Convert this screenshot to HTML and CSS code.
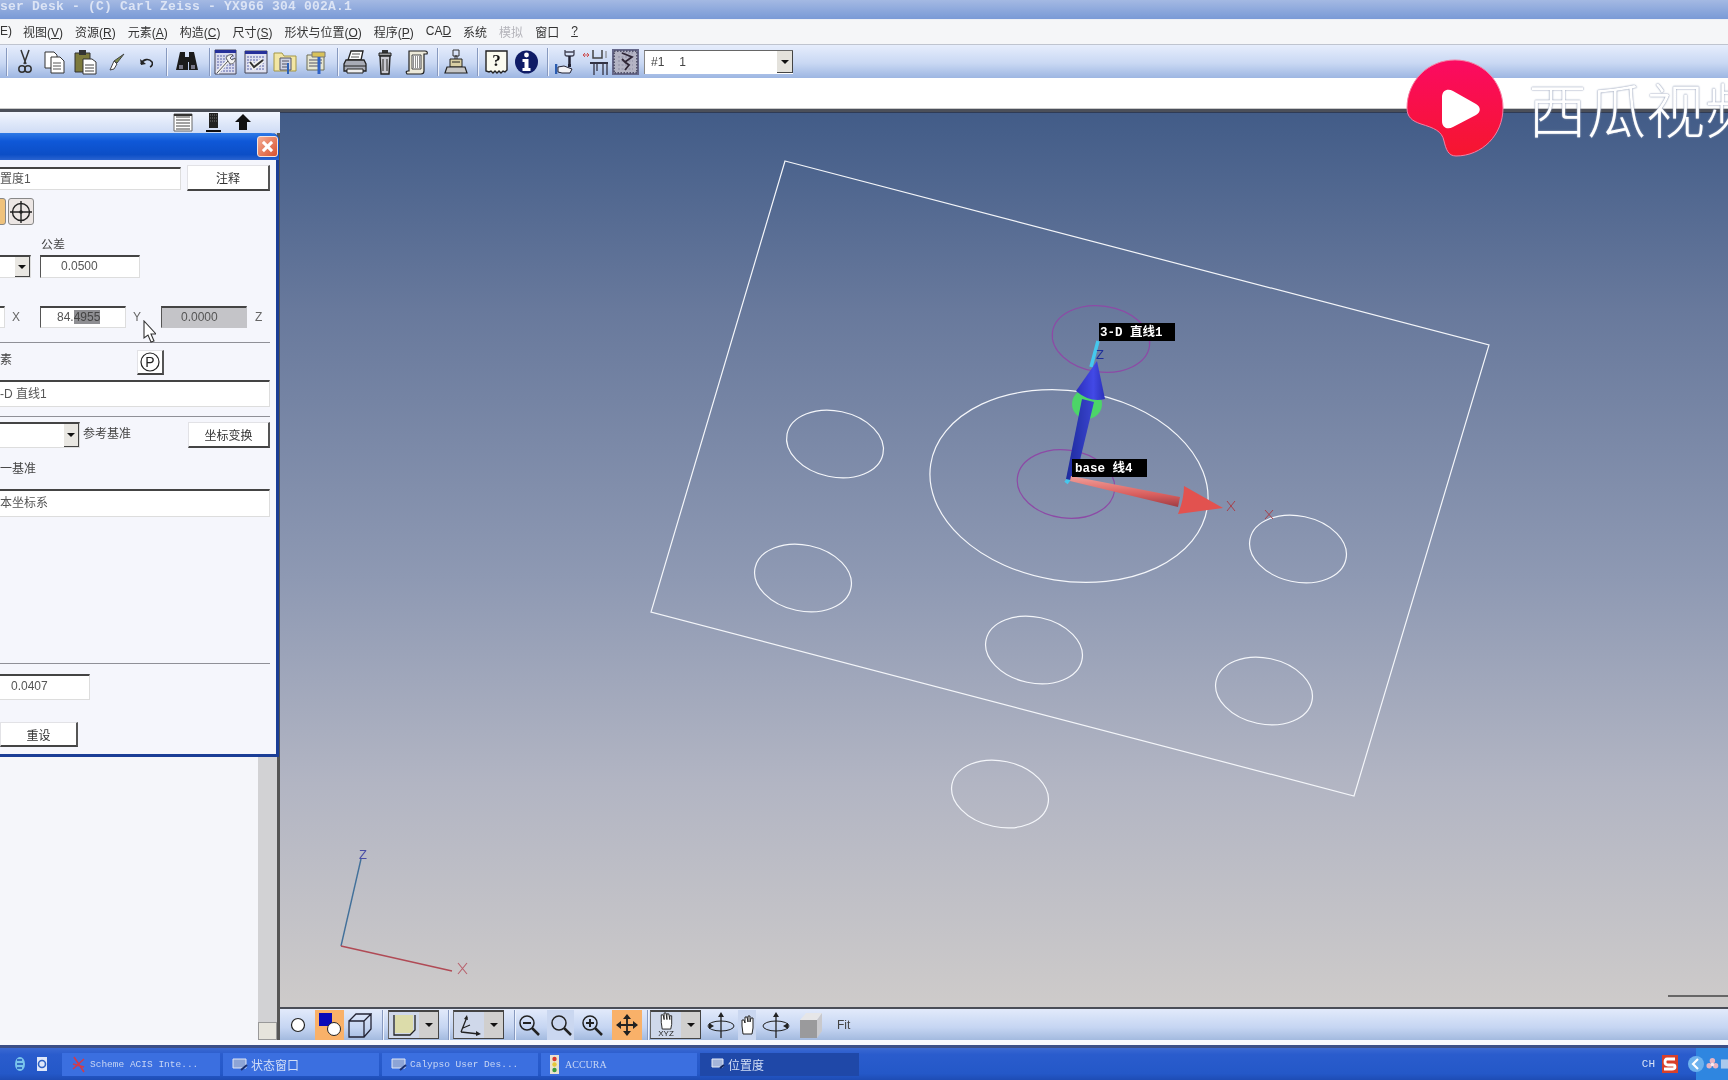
FILE: index.html
```html
<!DOCTYPE html>
<html lang="zh">
<head>
<meta charset="utf-8">
<title>Calypso User Desk</title>
<link rel="stylesheet" href="styles.css">
</head>
<body>
<div class="app">
  <header class="titlebar">ser Desk - (C) Carl Zeiss - YX966 304 002A.1</header>
  <nav class="menubar">
    <span class="m-first">E)</span>
    <span class="m m1">视图(<u>V</u>)</span>
    <span class="m">资源(<u>R</u>)</span>
    <span class="m">元素(<u>A</u>)</span>
    <span class="m">构造(<u>C</u>)</span>
    <span class="m">尺寸(<u>S</u>)</span>
    <span class="m">形状与位置(<u>O</u>)</span>
    <span class="m">程序(<u>P</u>)</span>
    <span class="m">CA<u>D</u></span>
    <span class="m">系统</span>
    <span class="m dim">模拟</span>
    <span class="m">窗口</span>
    <span class="m"><u>?</u></span>
  </nav>
  <div class="toolbar">
    <i class="sep"></i>
    <svg class="ml10" width="14" height="26" viewBox="0 0 14 26"><path d="M3 1l5 14M11 1L6 15" stroke="#333" stroke-width="1.500" fill="none"/><circle cx="4" cy="20" r="3.200" fill="none" stroke="#333" stroke-width="1.500"/><circle cx="10" cy="20" r="3.200" fill="none" stroke="#333" stroke-width="1.500"/></svg>
    <svg class="ml11" width="23" height="26" viewBox="0 0 23 26"><path d="M2 3h9l3 3v13H2z" fill="#fff" stroke="#333"/><path d="M8 8h9l4 4v12H8z" fill="#fff" stroke="#333"/><path d="M10 14h8M10 17h8M10 20h8" stroke="#555"/></svg>
    <svg class="ml8" width="23" height="26" viewBox="0 0 23 26"><path d="M1 4h15v19H1z" fill="#7d7a3c" stroke="#333"/><path d="M5 1h7v5H5z" fill="#333"/><path d="M9 10h9l4 3v12H9z" fill="#fff" stroke="#333"/><path d="M11 16h9M11 19h9M11 22h9" stroke="#444"/></svg>
    <svg class="ml12" width="16" height="26" viewBox="0 0 16 26"><path d="M15 5l-7 9-3-2z" fill="#7d8c4a" stroke="#444"/><path d="M5 12l3 3-3 5-4 1z" fill="#fff" stroke="#444"/></svg>
    <svg class="ml14" width="14" height="26" viewBox="0 0 14 26"><path d="M2 15c2-5 8-6 11-2 1 2 0 4-2 5" fill="none" stroke="#222" stroke-width="1.600"/><path d="M1 10l1 6 5-1z" fill="#222"/></svg>
    <i class="sep ml13"></i>
    <svg class="ml7" width="24" height="26" viewBox="0 0 24 26"><path d="M5 3h5v5h4V3h5l4 18h-9v-8h-1v8H1z" fill="#1b1b1b"/><path d="M4 16h4v4H4zM16 16h4v4h-4z" fill="#778"/></svg>
    <i class="sep ml10"></i>
    <svg class="ml3" width="23" height="26" viewBox="0 0 23 26"><path d="M1 1h21v24H1z" fill="#d9dbef" stroke="#445"/><path d="M1 1h21v3H1z" fill="#26309a"/><path d="M3 7h17M3 10h17M3 13h17M3 16h17M3 19h17M3 22h17" stroke="#5b64a8" stroke-dasharray="2 1"/><path d="M3 24l11-12" stroke="#f2f2f2" stroke-width="3.500"/><path d="M3 24l11-12" stroke="#555" stroke-width="1"/><path d="M12 9c1-3 5-4 7-3l-3 3 2 2 3-2c1 3-1 6-5 6z" fill="#f2f2f2" stroke="#444" stroke-width=".8"/></svg>
    <svg class="ml7" width="24" height="26" viewBox="0 0 24 26"><path d="M1 2h22v22H1z" fill="#dfe1f1" stroke="#445"/><path d="M1 2h22v3H1z" fill="#26309a"/><path d="M3 8h18M3 11h18M3 14h18M3 17h18M3 20h18" stroke="#5b64a8" stroke-dasharray="2 1"/><path d="M6 13l4 5 9-7" stroke="#f3f3f3" stroke-width="5" fill="none"/><path d="M6 13l4 5 9-7" stroke="#333" stroke-width="2" fill="none"/></svg>
    <svg class="ml5" width="24" height="26" viewBox="0 0 24 26"><path d="M1 4h8l2 3h12v15H1z" fill="#f2e6a4" stroke="#a39646"/><path d="M7 9h11v12H7z" fill="#cdd2e2" stroke="#556"/><path d="M9 12h7M9 15h7M9 18h7" stroke="#556"/><path d="M15 14v11" stroke="#2c62b8" stroke-width="2"/></svg>
    <svg class="ml8" width="24" height="26" viewBox="0 0 24 26"><path d="M2 6h17v15H2z" fill="#e6e6d2" stroke="#6d6d55"/><path d="M7 3h13v5H7z" fill="#d8c25a" stroke="#777"/><path d="M4 11h13M4 14h13M4 17h9" stroke="#556"/><path d="M14 8v17" stroke="#2f62c6" stroke-width="3"/></svg>
    <i class="sep ml8"></i>
    <svg class="ml4" width="24" height="26" viewBox="0 0 24 26"><path d="M8 2h12l-2 9H5z" fill="#fff" stroke="#222" stroke-width="1.300"/><path d="M9 5h8M8 8h8" stroke="#555"/><path d="M3 11h18l2 4v7H1v-7z" fill="#a8abb6" stroke="#222" stroke-width="1.300"/><path d="M1 17h22" stroke="#222"/><path d="M4 20h16v4H4z" fill="#eee" stroke="#222"/></svg>
    <svg class="ml10" width="16" height="26" viewBox="0 0 16 26"><path d="M5 1h6v3H5z" fill="#333"/><path d="M2 4h12v3H2z" fill="#999" stroke="#222"/><path d="M3 7h10l-1 18H4z" fill="#c9c9d0" stroke="#222" stroke-width="1.400"/><path d="M6 10v12M10 10v12" stroke="#555" stroke-width="1.400"/></svg>
    <svg class="ml12" width="23" height="26" viewBox="0 0 23 26"><path d="M4 2h16q3 0 2 3h-3v17q0 3-3 3H2q-2-3 1-3h1z" fill="#ece9d9" stroke="#222" stroke-width="1.200"/><path d="M7 6h9v14H7z" fill="#fff" stroke="#444"/><path d="M8 8h7M8 10h7M8 12h7M8 14h7M8 16h7M8 18h7" stroke="#222" stroke-dasharray="1 1"/></svg>
    <i class="sep ml9"></i>
    <svg class="ml5" width="24" height="26" viewBox="0 0 24 26"><path d="M9 1h6v6h-6zM11 7h2v4h-2z" fill="none" stroke="#333"/><path d="M6 10h12v8H6z" fill="#d9cfa4" stroke="#222"/><path d="M3 18h18l2 6H1z" fill="#c6c6c6" stroke="#222" stroke-width="1.200"/><path d="M8 13h8" stroke="#222"/></svg>
    <i class="sep ml9"></i>
    <svg class="ml6" width="23" height="26" viewBox="0 0 23 26"><path d="M1 2h21v19l-2 2-2-1-2 2-2-2-2 2-2-2-2 2-2-2-2 1-3-1z" fill="#fbfbf0" stroke="#222" stroke-width="1.400"/><text class="svg-help" x="11.500" y="17">?</text></svg>
    <svg class="ml7" width="23" height="26" viewBox="0 0 23 26"><circle cx="11.500" cy="13" r="11.500" fill="#0f1c66"/><circle cx="11.500" cy="6" r="2.400" fill="#fff"/><path d="M7.500 10h6v9h2v3h-8v-3h2v-6h-2z" fill="#fff"/></svg>
    <i class="sep ml9"></i>
    <svg class="ml6" width="22" height="26" viewBox="0 0 22 26"><path d="M10 1v4q0 2 2 2h5q2 0 2-2V1M10 3h9" fill="none" stroke="#445" stroke-width="1.300"/><path d="M14.500 7v10" stroke="#223" stroke-width="2.500"/><path d="M13 15h3v3h-3z" fill="#223"/><path d="M1 15v10" stroke="#2b5cb0" stroke-width="2.600"/><path d="M3 18l6-1 8 3-2 4H7l-4-1z" fill="#f2f2f6" stroke="#223"/></svg>
    <svg class="ml6" width="26" height="26" viewBox="0 0 26 26"><path d="M0 6h6M0 6l2-2M0 6l2 2M6 6L4 4M6 6L4 8" stroke="#c44" stroke-width=".9"/><path d="M10 1v8h9V1" fill="none" stroke="#444" stroke-width="1.500"/><path d="M23 2v7" stroke="#777"/><path d="M7 13h18v2H7z" fill="#334"/><path d="M11 15v11M14 15v7M20 15v11M24 15v11" stroke="#334" stroke-width="1.300"/></svg>
    <svg class="ml3" width="27" height="26" viewBox="0 0 27 26"><path d="M0 0h27v26H0z" fill="#66688a"/><path d="M2 2h23v22H2z" fill="#b4b4c4"/><path d="M2 2h23v22H2z" fill="none" stroke="#55556e" stroke-width="2" stroke-dasharray="1.500 1.500"/><path d="M9 4h12M6 8h15M6 12h15M6 16h15M6 20h15" stroke="#8b8ba2" stroke-dasharray="2 1.500"/><path d="M10 4l10 4-7 5 4 3-4 5M10 10l4 4" stroke="#2f2636" stroke-width="1.800" fill="none"/></svg>
    <div class="combo ml5"><span class="combo-text">#1</span><span class="combo-text combo-num">1</span><span class="combo-arrow"><b></b></span></div>
  </div>
  <div class="strip"></div>
  <main class="main">
    <aside class="side">
      <div class="side-head">
        <svg width="20" height="19" viewBox="0 0 20 19"><path d="M1 1h18v17H1z" fill="#fff" stroke="#666"/><path d="M3 4h14M3 7h14M3 10h14M3 13h14M3 16h14" stroke="#444"/><path d="M1 1h18v2H1z" fill="#333"/></svg>
        <svg class="hd2" width="15" height="19" viewBox="0 0 15 19"><path d="M3 0h9v15H3z" fill="#222"/><path d="M4 2h7M4 5h7M4 8h7" stroke="#777" stroke-dasharray="1 1"/><path d="M0 17h15v2H0z" fill="#111"/></svg>
        <svg class="hd3" width="16" height="19" viewBox="0 0 16 19"><path d="M8 1l8 8h-4v8H4V9H0z" fill="#111"/></svg>
      </div>
      <div class="side-body"><div class="scroll"><span class="scroll-btn"></span></div></div>
    </aside>
    <section class="stage">
      <div class="viewport">
        <svg class="scene" viewBox="280 113 1448 893" preserveAspectRatio="none">
          <defs>
            <linearGradient id="cone" x1="0" y1="0" x2="1" y2="0"><stop offset="0" stop-color="#2c2fbc"/><stop offset=".6" stop-color="#4249e6"/><stop offset="1" stop-color="#2a30b8"/></linearGradient>
            <linearGradient id="shaft" x1="0" y1="0" x2="1" y2="0"><stop offset="0" stop-color="#1d2a9c"/><stop offset="1" stop-color="#3a45d0"/></linearGradient>
            <linearGradient id="redshaft" x1="0" y1="0" x2="0" y2="1"><stop offset="0" stop-color="#f2a09a"/><stop offset=".6" stop-color="#d95f5e"/><stop offset="1" stop-color="#9e3c44"/></linearGradient>
          </defs>
          <g fill="none" stroke="#f4f6fa" stroke-width="1.200">
            <path d="M785 160L1489 344L1354 795L651 611Z"/>
            <ellipse cx="1069" cy="485" rx="140" ry="95" transform="rotate(9 1069 485)"/>
            <ellipse cx="835" cy="443" rx="49" ry="33" transform="rotate(12 835 443)"/>
            <ellipse cx="803" cy="577" rx="49" ry="33" transform="rotate(12 803 577)"/>
            <ellipse cx="1298" cy="548" rx="49" ry="33" transform="rotate(12 1298 548)"/>
            <ellipse cx="1034" cy="649" rx="49" ry="33" transform="rotate(12 1034 649)"/>
            <ellipse cx="1264" cy="690" rx="49" ry="33" transform="rotate(12 1264 690)"/>
            <ellipse cx="1000" cy="793" rx="49" ry="33" transform="rotate(12 1000 793)"/>
          </g>
          <g fill="none" stroke="#8d4aa6" stroke-width="1.200">
            <ellipse cx="1101" cy="338" rx="49" ry="33" transform="rotate(8 1101 338)"/>
            <ellipse cx="1066" cy="483" rx="49" ry="34" transform="rotate(8 1066 483)"/>
          </g>
          <path d="M1098 340L1091 366" stroke="#45c8ee" stroke-width="3.500"/>
          <path d="M1066 482L1071 475" stroke="#45c8ee" stroke-width="4"/>
          <circle cx="1087" cy="403" r="15" fill="#4cd568"/>
          <path d="M1082 398L1094 401L1075 480L1066 478Z" fill="url(#shaft)"/>
          <path d="M1097 360L1076 390Q1090 402 1105 398Z" fill="url(#cone)"/>
          <path d="M1071 475L1180 496L1178 506L1070 480Z" fill="url(#redshaft)"/>
          <path d="M1184 485L1223 507L1178 513Q1184 498 1184 485Z" fill="#e2524f"/>
          <g fill="none" stroke="#a8404a">
            <path d="M1227 500l8 10M1235 500l-8 10M1265 509l8 9M1273 509l-8 9"/>
          </g>
          <path class="soft-x" d="M458 962l9 11M467 962l-9 11"/>
          <path d="M341 945L361 858" stroke="#41709a" stroke-width="1.400"/>
          <path d="M341 945L452 970" stroke="#b04a55" stroke-width="1.400"/>
          <path d="M1668 995H1728" stroke="#444" stroke-width="1.300"/>
          <text class="axis-z" x="1096" y="358">Z</text>
          <text class="axis-z2" x="359" y="858">Z</text>
          <rect x="1099" y="322" width="76" height="18" fill="#000"/>
          <rect x="1072" y="458" width="75" height="18" fill="#000"/>
          <text class="tag" x="1100" y="335">3-D 直线1</text>
          <text class="tag" x="1075" y="471">base 线4</text>
        </svg>
      </div>
      <div class="viewbar">
        <span class="vb w25"><svg width="16" height="16" viewBox="0 0 16 16"><circle cx="8" cy="8" r="6.500" fill="#fff" stroke="#222" stroke-width="1.200"/></svg></span>
        <span class="vb hot w29 ml5"><svg width="28" height="28" viewBox="0 0 28 28"><path d="M3 2h13v13H3z" fill="#0a0ab8"/><circle cx="18" cy="18" r="6.500" fill="#fff" stroke="#222"/></svg></span>
        <span class="vb w24 ml4"><svg width="24" height="26" viewBox="0 0 24 26"><path d="M1 9h15v16H1zM1 9l7-7h15l-7 7M16 25l7-8V2" fill="none" stroke="#223" stroke-width="1.300"/></svg></span>
        <i class="sep ml10"></i>
        <span class="vb split ml4"><span class="vb-main"><svg width="24" height="26" viewBox="0 0 24 26"><path d="M3 3h18v18H3z" fill="#dcdcaa"/><path d="M2 3v20h16l5-5V3" fill="none" stroke="#222" stroke-width="1.300"/></svg></span><span class="vb-drop"><b></b></span></span>
        <i class="sep ml9"></i>
        <span class="vb split ml3"><span class="vb-main"><svg width="28" height="26" viewBox="0 0 28 26"><path d="M6 20L12 5M6 20l18 2M8 16l7-3" stroke="#222" stroke-width="1.300" fill="none"/><path d="M12 3l-3 4 4 1zM26 22l-5-3v5z" fill="#222"/></svg></span><span class="vb-drop"><b></b></span></span>
        <i class="sep ml10"></i>
        <span class="vb w24 ml1"><svg width="24" height="24" viewBox="0 0 24 24"><circle cx="10" cy="10" r="7" fill="none" stroke="#222" stroke-width="1.500"/><path d="M6 10h8" stroke="#222" stroke-width="2"/><path d="M15 15l7 7" stroke="#222" stroke-width="2.500"/></svg></span>
        <span class="vb w27 ml6 soft"><svg width="24" height="24" viewBox="0 0 24 24"><circle cx="10" cy="10" r="7" fill="none" stroke="#222" stroke-width="1.500"/><path d="M15 15l7 7" stroke="#222" stroke-width="2.500"/></svg></span>
        <span class="vb w25 ml5"><svg width="24" height="24" viewBox="0 0 24 24"><circle cx="10" cy="10" r="7" fill="none" stroke="#222" stroke-width="1.500"/><path d="M6 10h8M10 6v8" stroke="#222" stroke-width="2"/><path d="M15 15l7 7" stroke="#222" stroke-width="2.500"/></svg></span>
        <span class="vb hot w30 ml8"><svg width="24" height="24" viewBox="0 0 24 24"><path d="M12 2v20M2 12h20" stroke="#222" stroke-width="1.800"/><path d="M12 1l-4 5h8zM12 23l-4-5h8zM1 12l5-4v8zM23 12l-5-4v8z" fill="#222"/></svg></span>
        <i class="sep ml5"></i>
        <span class="vb split ml1"><span class="vb-main hand"><svg width="22" height="19" viewBox="0 0 22 19"><path d="M7 18l-1-7V3l2 0 1 5V1h2l1 7V2h2l1 6V4h2v9l-1 5z" fill="#fff" stroke="#222"/></svg><span class="xyz">XYZ</span></span><span class="vb-drop"><b></b></span></span>
        <span class="vb w30 ml5"><svg width="30" height="28" viewBox="0 0 30 28"><ellipse cx="15" cy="15" rx="13" ry="5" fill="none" stroke="#222"/><path d="M15 4v23" stroke="#222" stroke-width="1.300"/><path d="M15 1l-3 5h6zM8 15l-5-3v6z" fill="#222"/></svg></span>
        <span class="vb w18 ml2 soft"><svg width="16" height="20" viewBox="0 0 16 20"><path d="M4 19l-1-8V5l2 0 1 3V2h2l1 5V1h2v6l1-4h2v10l-1 6z" fill="#fff" stroke="#222"/></svg></span>
        <span class="vb w30 ml5"><svg width="30" height="28" viewBox="0 0 30 28"><ellipse cx="15" cy="15" rx="13" ry="5" fill="none" stroke="#222"/><path d="M15 4v23" stroke="#222" stroke-width="1.300"/><path d="M15 1l-3 5h6zM22 15l5-3v6z" fill="#222"/></svg></span>
        <span class="vb w25 ml7"><svg width="25" height="28" viewBox="0 0 25 28"><path d="M2 9h17v18H2z" fill="#9a9a9c"/><path d="M2 9l6-7h16l-5 7z" fill="#e6e6e8"/><path d="M19 9l5-7v18l-5 7z" fill="#c9c9cd"/></svg></span>
        <span class="fit">Fit</span>
      </div>
    </section>

    <div class="dialog">
      <div class="dlg-title"><span class="dlg-close"></span></div>
      <div class="dlg-body">
        <div class="row r-a"><div class="field name">置度1</div><button class="btn note">注释</button></div>
        <div class="row r-b"><span class="iconbtn orange"></span><span class="iconbtn"><svg width="24" height="24" viewBox="0 0 24 24"><circle cx="12" cy="12" r="8.500" fill="none" stroke="#222" stroke-width="1.400"/><path d="M12 1v22M1 12h22" stroke="#222" stroke-width="1.400"/><circle cx="12" cy="12" r="1.800" fill="#222"/></svg></span></div>
        <div class="row r-c lbl">公差</div>
        <div class="row r-d"><div class="field drop-field cutd"><span class="drop"><b></b></span></div><div class="field tol">0.0500</div></div>
        <div class="row r-e">
          <div class="field cut-e"></div><span class="axis ax-x">X</span>
          <div class="field coord">84.<mark class="sel">4955</mark></div><span class="axis ax-y">Y</span>
          <div class="field coord gray">0.0000</div><span class="axis ax-z">Z</span>
        </div>
        <hr class="rule r1">
        <div class="row r-f"><span class="lbl">素</span><button class="btn pbtn"><svg width="20" height="20" viewBox="0 0 20 20"><circle cx="10" cy="10" r="9" fill="none" stroke="#222" stroke-width="1.200"/><text class="svg-p" x="10" y="15">P</text></svg></button></div>
        <div class="row r-g"><div class="field wide">-D 直线1</div></div>
        <hr class="rule r2">
        <div class="row r-h"><div class="field drop-field cuth"><span class="drop"><b></b></span></div><span class="lbl ref">参考基准</span><button class="btn trans">坐标变换</button></div>
        <div class="row r-i lbl">一基准</div>
        <div class="row r-j"><div class="field wide base">本坐标系</div></div>
        <hr class="rule r3">
        <div class="row r-k"><div class="field res">0.0407</div></div>
        <div class="row r-l"><button class="btn reset">重设</button></div>
      </div>
    </div>
    <svg class="cursor" width="13" height="23" viewBox="0 0 13 23"><path d="M1 1v17l4-3 3 7 3-1-3-7h5z" fill="#fff" stroke="#333" stroke-width="1.100"/></svg>
  </main>
  <div class="gapline"></div>
  <footer class="taskbar">
    <svg class="tb-ico ti1" width="12" height="16" viewBox="0 0 12 16"><ellipse cx="6" cy="8" rx="5" ry="7" fill="#79c4ec"/><path d="M3 8h6M3 4h5M3 12h5" stroke="#1d4fb8" stroke-width="1.400"/></svg>
    <svg class="tb-ico ti2" width="12" height="16" viewBox="0 0 12 16"><path d="M1 1h10v14H1z" fill="#dfe8fa"/><circle cx="6" cy="8" r="3.500" fill="none" stroke="#2d62c4" stroke-width="1.600"/></svg>
    <div class="task t1"><svg width="16" height="17" viewBox="0 0 16 17"><path d="M3 1l10 15M13 3L2 13M2 8l11 3" stroke="#d23a4a" stroke-width="1.600" fill="none"/></svg><span class="task-t">Scheme ACIS Inte...</span></div>
    <div class="task"><svg class="win" width="16" height="13" viewBox="0 0 16 13"><path d="M1 1h13v9H1z" fill="#8da4d6" stroke="#dfe6f6"/><path d="M9 12l6-5" stroke="#1a2f70" stroke-width="2"/></svg><span class="task-c">状态窗口</span></div>
    <div class="task"><svg class="win" width="16" height="13" viewBox="0 0 16 13"><path d="M1 1h13v9H1z" fill="#8da4d6" stroke="#dfe6f6"/><path d="M9 12l6-5" stroke="#1a2f70" stroke-width="2"/></svg><span class="task-t">Calypso User Des...</span></div>
    <div class="task"><svg width="9" height="19" viewBox="0 0 9 19"><path d="M0 0h9v19H0z" fill="#e8e2cf"/><circle cx="4.500" cy="4" r="2.200" fill="#d8382e"/><circle cx="4.500" cy="9.500" r="2.200" fill="#e4c838"/><circle cx="4.500" cy="15" r="2.200" fill="#3a9a3c"/></svg><span class="task-t accura">ACCURA</span></div>
    <div class="task active"><svg class="win" width="14" height="12" viewBox="0 0 14 12"><path d="M1 1h11v8H1z" fill="#a4b5da" stroke="#e6ecf8"/><path d="M9 10l4-3" stroke="#10245c" stroke-width="2"/></svg><span class="task-c">位置度</span></div>
    <div class="tray">
      <span class="ch">CH</span>
      <svg width="16" height="18" viewBox="0 0 16 18"><path d="M0 0h16v18H0z" fill="#d8402a"/><path d="M13 4H5Q3 4 3 7t3 3h5q2 0 2 2t-3 2H2" fill="none" stroke="#fff" stroke-width="2.800"/></svg>
      <svg class="ml10 tray-arrow" width="16" height="16" viewBox="0 0 16 16"><circle cx="8" cy="8" r="8" fill="#6db2ee"/><path d="M10 3L5 8l5 5" fill="none" stroke="#fff" stroke-width="2.200"/></svg>
      <div class="tray-in"><svg width="14" height="14" viewBox="0 0 14 14"><circle cx="7" cy="3.500" r="3" fill="#e8b4c2"/><circle cx="3.500" cy="9" r="3" fill="#e8b4c2"/><circle cx="10.500" cy="9" r="3" fill="#e8b4c2"/><circle cx="7" cy="7.500" r="2" fill="#fbe8ee"/></svg><svg width="9" height="14" viewBox="0 0 9 14"><path d="M1 2h8v10H1z" fill="#a9c9ec"/></svg></div>
    </div>
  </footer>

  <div class="brand">
    <svg class="brand-mark" width="98" height="98" viewBox="0 0 98 98"><defs><linearGradient id="bg" x1="0" y1="0" x2="0" y2="1"><stop offset="0" stop-color="#fb0a62"/><stop offset="1" stop-color="#f6162e"/></linearGradient></defs><path d="M49 1C76 1 97 22 97 49S76 97 50 97C42 97 40 90 38 82C36 72 28 69 15 65C6 62 1 58 1 49C1 22 22 1 49 1Z" fill="url(#bg)" stroke="#f57fa3" stroke-width="1"/><path d="M36 38C36 31 42 29 47 32L70 45C75 48 75 53 70 56L47 68C42 71 36 69 36 62Z" fill="#fff"/></svg>
    <span class="brand-name">西瓜视频</span>
  </div>
</div>
</body>
</html>
```

FILE: styles.css
```css
* { box-sizing: border-box; }
html, body { margin: 0; padding: 0; }
body {
  width: 1728px;
  height: 1080px;
  overflow: hidden;
  font-family: "Liberation Sans", "Noto Sans CJK SC", sans-serif;
  font-size: 12px;
  color: #333;
}
.app { position: relative; display: flex; flex-direction: column; width: 1728px; height: 1080px; overflow: hidden; background: #fff; filter: blur(.45px); }

.ml1 { margin-left: 1px; } .ml2 { margin-left: 2px; } .ml3 { margin-left: 3px; } .ml4 { margin-left: 4px; }
.ml5 { margin-left: 5px; } .ml6 { margin-left: 6px; } .ml7 { margin-left: 7px; } .ml8 { margin-left: 8px; }
.ml9 { margin-left: 9px; } .ml10 { margin-left: 10px; } .ml11 { margin-left: 11px; } .ml12 { margin-left: 12px; }
.ml13 { margin-left: 13px; } .ml14 { margin-left: 14px; }

.titlebar {
  height: 19px;
  flex: none;
  background: linear-gradient(#a4b9e3, #86a3da 70%, #7a9ad6);
  color: #dce4f5;
  font: bold 13px/13px "Liberation Mono", "Noto Sans CJK SC", monospace;
  letter-spacing: .2px;
  white-space: nowrap;
}
.menubar {
  height: 26px;
  flex: none;
  display: flex;
  align-items: center;
  padding-bottom: 2px;
  background: #f5f6f8;
  border-top: 1px solid #eef0f6;
  border-bottom: 1px solid #bfc4cf;
  color: #333;
  font-size: 12px;
  white-space: nowrap;
}
.m-first { width: 11px; }
.m { margin-left: 12px; }
.dim { color: #b4b4ba; }
.toolbar {
  height: 33px;
  flex: none;
  display: flex;
  align-items: center;
  padding-left: 6px;
  background: linear-gradient(#e6edfc, #c9d8f3 55%, #9db6e2);
}
.sep { display: block; width: 2px; height: 28px; background: #8799bf; border-right: 1px solid #eef3fd; flex: none; }
.toolbar svg { flex: none; }
.combo { display: flex; align-items: center; width: 149px; height: 24px; background: #fff; border-top: 1px solid #666; border-left: 1px solid #888; position: relative; }
.combo-text { margin-left: 6px; font-size: 12px; color: #444; }
.combo-num { margin-left: 15px; }
.combo-arrow { margin-left: auto; width: 16px; height: 22px; background: #e4e2dc; border-right: 1px solid #444; border-bottom: 1px solid #444; display: flex; align-items: center; justify-content: center; }
.combo-arrow b, .vb-drop b, .drop b { display: block; width: 0; height: 0; border: 4px solid transparent; border-top: 4px solid #111; border-bottom: 0; }
.strip { height: 34px; flex: none; background: #fff; border-bottom: 3px solid #4b4f59; box-shadow: inset 0 -1px 0 #c9c9c9; }

.main { position: relative; height: 928px; flex: none; display: flex; }
.side { width: 280px; flex: none; display: flex; flex-direction: column; }
.side-head {
  height: 21px;
  flex: none;
  display: flex;
  align-items: flex-start;
  padding: 1px 0 0 173px;
  background: linear-gradient(#f1f5fe, #cfdcf5);
  overflow: hidden;
}
.hd2 { margin-left: 13px; }
.hd3 { margin-left: 14px; }
.side-body { flex: 1; display: flex; justify-content: flex-end; background: #f5f6fa; border-right: 3px solid #555; }
.scroll { width: 19px; display: flex; flex-direction: column; justify-content: flex-end; background: #d2d2d4; }
.scroll-btn { height: 18px; background: #e6e4dc; border: 1px solid #999; }

.stage { flex: 1; display: flex; flex-direction: column; min-width: 0; }
.viewport { height: 895px; flex: none; padding-top: 1px; background: linear-gradient(#425c88, #68799c 22%, #8e99b3 52%, #b2b5c3 75%, #cecbca); border-top: 1px solid #2f3b55; }
.scene { display: block; width: 100%; height: 893px; }
.tag { fill: #fff; font: bold 12.500px "Liberation Mono", "Noto Sans CJK SC", monospace; }
.axis-z { fill: #1e2f9a; font: 13px "Liberation Sans", sans-serif; }
.axis-z2 { fill: #4a4ea6; font: 13px "Liberation Sans", sans-serif; }
.soft-x { fill: none; stroke: #b8606c; stroke-width: 1.100; }
.viewbar {
  flex: 1;
  display: flex;
  align-items: center;
  padding-left: 5px;
  border-top: 2px solid #4a4d57;
  background: linear-gradient(#e2eafb, #c5d5f2 60%, #a3badf);
}
.vb { display: flex; align-items: center; justify-content: center; height: 30px; flex: none; }
.viewbar .sep { height: 30px; }
.w18 { width: 18px; } .w24 { width: 24px; } .w25 { width: 25px; } .w27 { width: 27px; } .w29 { width: 29px; } .w30 { width: 30px; }
.hot { background: #f9b169; }
.soft { background: #cad7f0; }
.split { border-top: 2px solid #444; border-right: 1px solid #444; border-bottom: 1px solid #444; border-left: 1px solid #666; height: 29px; }
.vb-main { display: flex; align-items: center; justify-content: center; width: 30px; height: 100%; background: #cfd8ea; }
.vb-drop { display: flex; align-items: center; justify-content: center; width: 19px; height: 100%; background: #d0cfce; }
.hand { flex-direction: column; justify-content: flex-start; }
.xyz { font-size: 8px; line-height: 8px; color: #222; }
.fit { margin-left: 14px; color: #444; font-size: 12px; }

.dialog {
  position: absolute;
  left: 0;
  top: 21px;
  width: 279px;
  height: 624px;
  display: flex;
  flex-direction: column;
  background: #f5f6fc;
  border-right: 3px solid #1b3e96;
  border-bottom: 3px solid #1b3e96;
  border-top-right-radius: 7px;
}
.dlg-title {
  height: 27px;
  flex: none;
  display: flex;
  justify-content: flex-end;
  align-items: center;
  padding-right: 1px;
  margin-right: -3px;
  border-top-right-radius: 8px;
  background: linear-gradient(#2e7ae6, #0f58d8 30%, #0c4ec6 80%, #2a63cf);
}
.dlg-close { width: 21px; height: 21px; border-radius: 3px; background: linear-gradient(135deg, #f4ad94, #d8512e); border: 1px solid #f4e4de; position: relative; }
.dlg-close::before, .dlg-close::after { content: ""; position: absolute; left: 3px; right: 3px; top: 8px; height: 3px; background: #fff; transform: rotate(45deg); }
.dlg-close::after { transform: rotate(-45deg); }
.dlg-body { flex: 1; overflow: hidden; width: 276px; }
.row { display: flex; align-items: center; width: 270px; }
.lbl { color: #444; font-size: 12px; line-height: 14px; }
.field { background: #fff; border-top: 2px solid #444; border-left: 1px solid #555; border-right: 1px solid #ddd; border-bottom: 1px solid #ddd; color: #555; font-size: 12px; display: flex; align-items: center; flex: none; white-space: nowrap; padding-bottom: 2px; }
.drop-field { padding-bottom: 0; }
.btn { display: flex; align-items: center; justify-content: center; background: #fff; border: 1px solid #e2e2e6; border-right: 2px solid #555; border-bottom: 2px solid #444; color: #333; font: 12px "Liberation Sans", "Noto Sans CJK SC", sans-serif; padding: 0; flex: none; }
.r-a { height: 26px; margin-top: 5px; }
.name { width: 181px; height: 23px; border-left: 0; }
.note { width: 83px; height: 26px; margin-left: 6px; }
.r-b { height: 27px; margin-top: 7px; }
.iconbtn { display: flex; align-items: center; justify-content: center; width: 26px; height: 27px; border: 1px solid #888; border-radius: 3px; background: #ece6e4; flex: none; }
.orange { margin-left: -20px; margin-right: 2px; background: #efc27c; }
.r-c { height: 14px; margin-top: 13px; padding-left: 41px; }
.r-d { height: 23px; margin-top: 3px; }
.drop-field { justify-content: flex-end; }
.cutd { width: 91px; height: 23px; margin-left: -60px; }
.drop { display: flex; align-items: center; justify-content: center; width: 15px; height: 100%; background: #e9e7e2; border-right: 1px solid #444; border-bottom: 1px solid #444; }
.tol { width: 100px; height: 23px; margin-left: 9px; padding-left: 20px; }
.r-e { height: 22px; margin-top: 28px; }
.cut-e { width: 45px; height: 22px; margin-left: -40px; }
.axis { color: #666; font-size: 12px; flex: none; width: 8px; }
.ax-x { margin-left: 7px; }
.coord { width: 86px; height: 22px; margin-left: 20px; padding-left: 16px; }
.ax-y { margin-left: 7px; }
.ax-y + .coord { margin-left: 20px; }
.ax-z { margin-left: 8px; }
.sel { background: #8e8e92; color: #444; }
.gray { background: #c4c4c8; padding-left: 19px; border-right-color: #c4c4c8; border-bottom-color: #c4c4c8; }
.rule { display: block; width: 270px; height: 1px; border: 0; background: #8f9097; margin: 0; }
.r1 { margin-top: 14px; }
.r-f { height: 25px; margin-top: 7px; }
.r-f .lbl { margin-top: -6px; }
.pbtn { width: 27px; height: 25px; margin-left: 125px; }
.svg-p { font: 14px "Liberation Sans", sans-serif; text-anchor: middle; fill: #222; }
.svg-help { font: bold 17px "Liberation Serif", serif; text-anchor: middle; fill: #111; }
.r-g { height: 27px; margin-top: 5px; }
.wide { width: 270px; height: 27px; border-left: 0; padding-bottom: 4px; }
.r2 { margin-top: 9px; }
.r-h { height: 26px; margin-top: 5px; }
.cuth { width: 90px; height: 26px; margin-left: -10px; }
.ref { margin-left: 3px; margin-top: -2px; }
.trans { width: 82px; height: 26px; margin-left: 57px; }
.r-i { height: 14px; margin-top: 14px; }
.r-j { height: 28px; margin-top: 13px; }
.base { height: 28px; }
.r3 { margin-top: 146px; }
.r-k { height: 26px; margin-top: 10px; }
.res { width: 100px; height: 26px; margin-left: -10px; padding-left: 20px; padding-bottom: 4px; }
.r-l { height: 25px; margin-top: 22px; }
.reset { width: 78px; height: 25px; }
.cursor { position: absolute; left: 143px; top: 208px; }

.gapline { height: 8px; flex: none; background: #f7f8fc; border-bottom: 3px solid #3c4f86; }
.taskbar {
  flex: 1;
  display: flex;
  align-items: center;
  background: linear-gradient(#3a69d2 0, #2a5ccd 20%, #2458c8 80%, #1e4cb4);
  color: #c8d6f4;
  min-height: 0;
}
.tb-ico { flex: none; }
.ti1 { margin-left: 14px; }
.ti2 { margin-left: 10px; }
.task { display: flex; align-items: center; width: 156px; height: 23px; margin-left: 3px; padding-left: 9px; gap: 3px; background: #3b6fe0; flex: none; overflow: hidden; white-space: nowrap; }
.t1 { margin-left: 14px; width: 158px; }
.active { background: #1f48a8; width: 159px; padding-left: 11px; }
.task svg { flex: none; }
.task-t { font: 9.500px "Liberation Mono", monospace; color: #c8d6f4; }
.task-c { font-size: 12px; color: #d2def6; }
.accura { font-family: "Liberation Serif", serif; font-size: 10px; margin-left: 3px; }
.tray { margin-left: auto; height: 100%; display: flex; align-items: center; }
.ch { font: 11px "Liberation Mono", monospace; color: #d5e0f6; margin-right: 7px; }
.tray-arrow { position: relative; z-index: 1; }
.tray-in { display: flex; align-items: center; gap: 1px; height: 100%; width: 32px; margin-left: -8px; padding-left: 10px; background: #2f86e0; overflow: hidden; }

.brand { position: absolute; left: 1406px; top: 59px; display: flex; align-items: center; width: 322px; overflow: hidden; pointer-events: none; }
.brand-mark { flex: none; }
.brand-name { margin-left: 24px; font-size: 59px; line-height: 60px; font-weight: 300; color: #fff; white-space: nowrap; font-family: "Noto Sans CJK SC", sans-serif; text-shadow: 0 0 2px #8e9ab4, 0 0 1px #8e9ab4; }
```
